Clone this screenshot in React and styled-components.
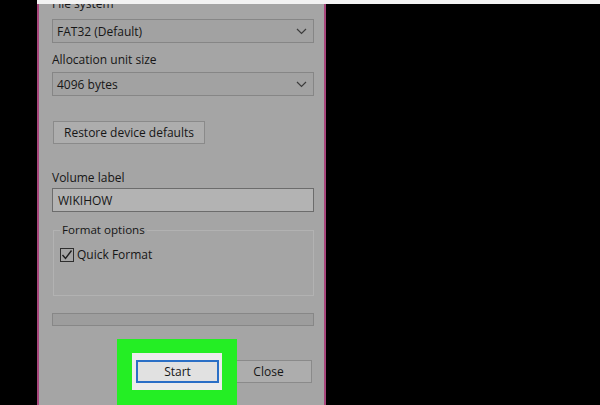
import React from "react";
import styled, { createGlobalStyle } from "styled-components";

const GlobalStyle = createGlobalStyle`
  html, body {
    margin: 0;
    padding: 0;
    background: #000;
    width: 600px;
    height: 405px;
    overflow: hidden;
  }
  #root {
    height: 405px;
  }
`;

const Screen = styled.div`
  display: flex;
  height: 405px;
  background: #000;
  font-family: "Open Sans", "Noto Sans", sans-serif;
  font-size: 12px;
  color: #161616;
`;

const Gutter = styled.div`
  width: 37px;
  flex: none;
`;

const Stage = styled.div`
  flex: 1;
  display: flex;
  flex-direction: column;
  min-height: 0;
`;

const TopStrip = styled.div`
  height: 4px;
  background: #f2f2f2;
  flex: none;
`;

const Panel = styled.div`
  width: 262px;
  flex: 1;
  min-height: 0;
  background: #a5a5a5;
  border-left: 2px solid #a8477c;
  border-right: 2px solid #a8477c;
  padding: 0 10px 0 13px;
  overflow: hidden;
  display: flex;
  flex-direction: column;

  & > * {
    flex-shrink: 0;
  }
`;

const Label = styled.div`
  height: 16px;
  line-height: 16px;
  margin-top: ${(p) => p.top}px;
  white-space: nowrap;
`;

const Select = styled.div`
  box-sizing: border-box;
  height: 24px;
  margin-top: ${(p) => p.top}px;
  border: 1px solid #868686;
  background: #a2a2a2;
  display: flex;
  align-items: center;
  justify-content: space-between;
  padding: 0 6px 0 4px;
`;

const Field = styled.div`
  box-sizing: border-box;
  height: 24px;
  margin-top: 2px;
  border: 1px solid #6c6c6c;
  background: #b3b3b3;
  display: flex;
  align-items: center;
  padding-left: 5px;
`;

const Button = styled.div`
  box-sizing: border-box;
  height: 23px;
  width: ${(p) => p.w}px;
  margin-top: ${(p) => p.top || 0}px;
  margin-left: ${(p) => p.left || 0}px;
  border: 1px solid #8a8a8a;
  background: #adadad;
  display: flex;
  align-items: center;
  justify-content: center;
  flex: none;
`;

const Group = styled.fieldset`
  margin: 10px 0 0 1px;
  padding: 0 0 0 6px;
  height: 74px;
  border: 1px solid #b2b2b2;
  box-sizing: border-box;
  min-width: 0;
`;

const Legend = styled.legend`
  padding: 0 2px;
  margin-left: 0;
  line-height: 16px;
  font-size: 11.6px;
`;

const CheckRow = styled.label`
  display: flex;
  align-items: center;
  gap: 3px;
  margin-top: 8px;
`;

const Box = styled.span`
  width: 14px;
  height: 14px;
  box-sizing: border-box;
  border: 1px solid #2e2e2e;
  display: flex;
  align-items: center;
  justify-content: center;
`;

const Progress = styled.div`
  box-sizing: border-box;
  height: 13px;
  margin-top: 17px;
  border: 1px solid #878787;
  background: #9d9d9d;
`;

const ButtonRow = styled.div`
  display: flex;
  align-items: flex-start;
  margin-top: 13px;
  padding-left: 65px;
`;

const Highlight = styled.div`
  position: relative;
  z-index: 1;
  background: #24ee24;
  padding: 14px 15px 20px 15px;
  flex: none;
`;

const Focus = styled.div`
  background: #ececec;
  padding: 7px 3px 7px 4px;
`;

const StartButton = styled.div`
  box-sizing: border-box;
  width: 83px;
  height: 23px;
  border: 2px solid #2a6fc6;
  background: #e1e1e1;
  display: flex;
  align-items: center;
  justify-content: center;
`;

const Chevron = () => (
  <svg width="11" height="7" viewBox="0 0 11 7">
    <polyline points="1,1 5.5,5.5 10,1" fill="none" stroke="#3c3c3c" strokeWidth="1.2" />
  </svg>
);

const Check = () => (
  <svg width="12" height="12" viewBox="0 0 12 12">
    <polyline points="1.5,6 4.5,9.5 10.5,1.5" fill="none" stroke="#1e1e1e" strokeWidth="1.4" />
  </svg>
);

export default function App() {
  return (
    <Screen>
      <GlobalStyle />
      <Gutter />
      <Stage>
        <TopStrip />
        <Panel>
          <Label top={-8}>File system</Label>
          <Select top={7}>
            FAT32 (Default)
            <Chevron />
          </Select>
          <Label top={9}>Allocation unit size</Label>
          <Select top={4}>
            4096 bytes
            <Chevron />
          </Select>
          <Button w={152} top={25} left={1}>
            Restore device defaults
          </Button>
          <Label top={26}>Volume label</Label>
          <Field>WIKIHOW</Field>
          <Group>
            <Legend>Format options</Legend>
            <CheckRow>
              <Box>
                <Check />
              </Box>
              Quick Format
            </CheckRow>
          </Group>
          <Progress />
          <ButtonRow>
            <Highlight>
              <Focus>
                <StartButton>Start</StartButton>
              </Focus>
            </Highlight>
            <Button w={87} top={21} left={-12}>
              Close
            </Button>
          </ButtonRow>
        </Panel>
      </Stage>
    </Screen>
  );
}
